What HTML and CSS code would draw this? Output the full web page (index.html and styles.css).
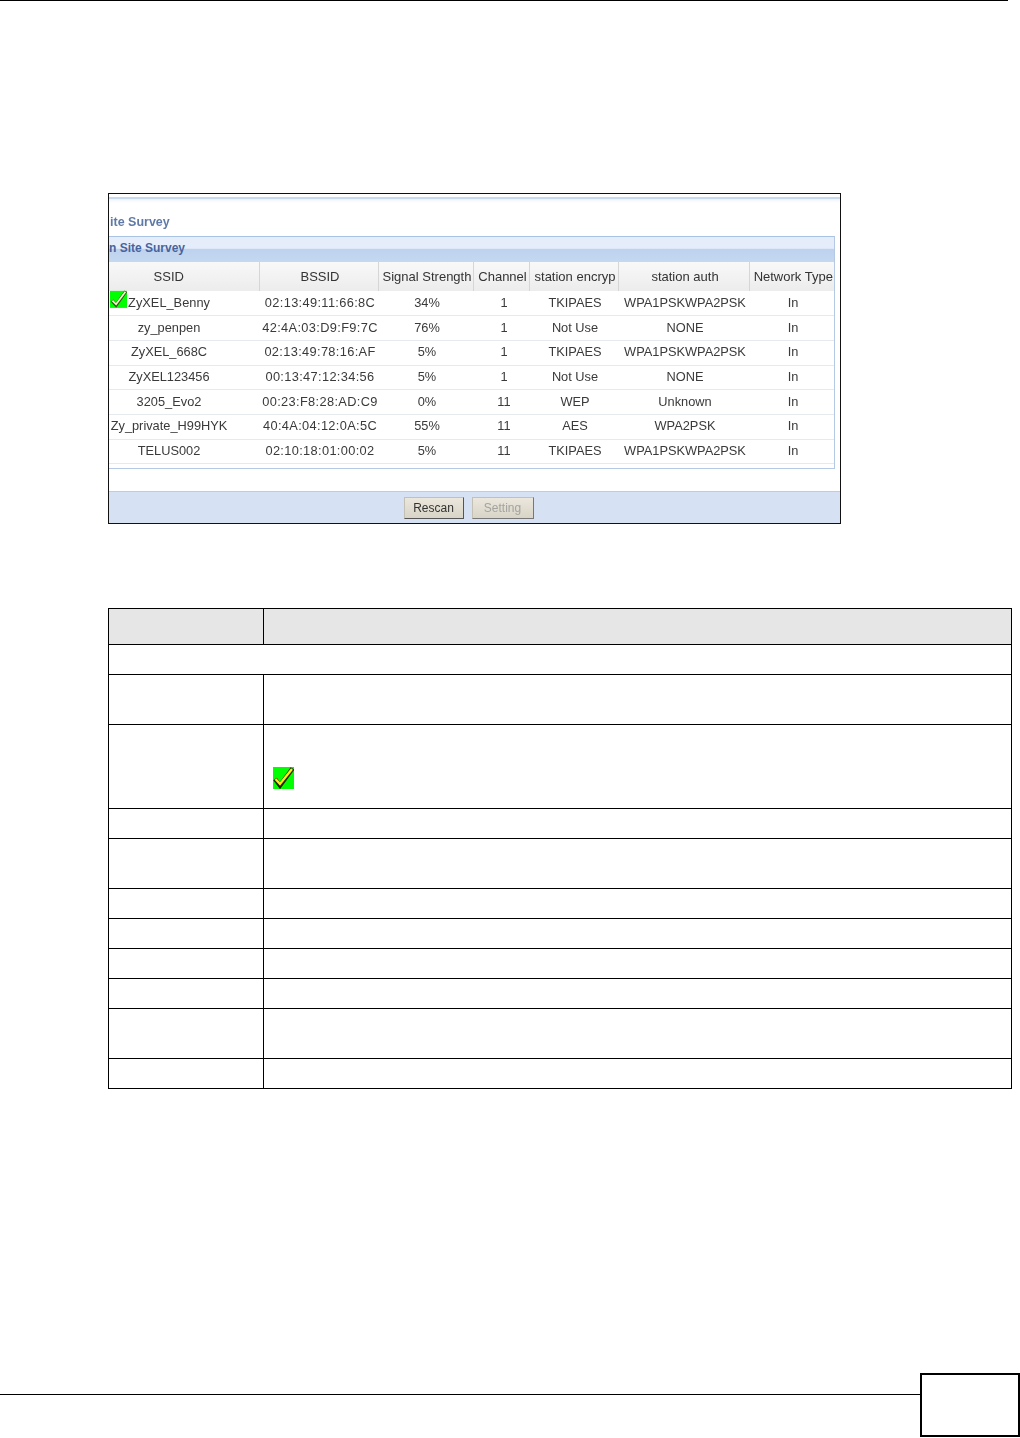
FILE: index.html
```html
<!DOCTYPE html>
<html lang="en">
<head>
<meta charset="utf-8">
<title>Site Survey</title>
<link rel="stylesheet" href="styles.css">
</head>
<body>
<div class="page">
  <header class="top-rule"></header>
  <main class="content">
    <figure class="shot">
      <div class="shot-top"></div>
      <h1 class="shot-title">ite Survey</h1>
      <section class="panel">
        <h2 class="panel-head">n Site Survey</h2>
        <table class="survey">
          <colgroup>
            <col class="c1"><col class="c2"><col class="c3"><col class="c4"><col class="c5"><col class="c6"><col class="c7">
          </colgroup>
          <thead>
            <tr><th class="ssid">SSID</th><th>BSSID</th><th>Signal Strength</th><th>Channel</th><th>station encryp</th><th>station auth</th><th>Network Type</th></tr>
          </thead>
          <tbody>
            <tr><td class="ssid"><svg class="check check-small" viewBox="0 0 21 22"><rect y="1" width="21" height="21" fill="#00ff00"/><path d="M2.5 13 L7.5 18.5 L19.5 1.5" fill="none" stroke="#2a5a10" stroke-width="4"/><path d="M3 13 L7.5 17.5 L19 2" fill="none" stroke="#f4f7c8" stroke-width="2.2"/></svg>ZyXEL_Benny</td><td class="mac">02:13:49:11:66:8C</td><td>34%</td><td class="chan">1</td><td>TKIPAES</td><td>WPA1PSKWPA2PSK</td><td>In</td></tr>
            <tr><td class="ssid">zy_penpen</td><td class="mac">42:4A:03:D9:F9:7C</td><td>76%</td><td class="chan">1</td><td>Not Use</td><td>NONE</td><td>In</td></tr>
            <tr><td class="ssid">ZyXEL_668C</td><td class="mac">02:13:49:78:16:AF</td><td>5%</td><td class="chan">1</td><td>TKIPAES</td><td>WPA1PSKWPA2PSK</td><td>In</td></tr>
            <tr><td class="ssid">ZyXEL123456</td><td class="mac">00:13:47:12:34:56</td><td>5%</td><td class="chan">1</td><td>Not Use</td><td>NONE</td><td>In</td></tr>
            <tr><td class="ssid">3205_Evo2</td><td class="mac">00:23:F8:28:AD:C9</td><td>0%</td><td class="chan">11</td><td>WEP</td><td>Unknown</td><td>In</td></tr>
            <tr><td class="ssid">Zy_private_H99HYK</td><td class="mac">40:4A:04:12:0A:5C</td><td>55%</td><td class="chan">11</td><td>AES</td><td>WPA2PSK</td><td>In</td></tr>
            <tr><td class="ssid">TELUS002</td><td class="mac">02:10:18:01:00:02</td><td>5%</td><td class="chan">11</td><td>TKIPAES</td><td>WPA1PSKWPA2PSK</td><td>In</td></tr>
          </tbody>
        </table>
      </section>
      <footer class="shot-foot">
        <button class="btn" type="button">Rescan</button>
        <button class="btn btn-off" type="button">Setting</button>
      </footer>
    </figure>

    <table class="doc">
      <colgroup><col class="d1"><col class="d2"></colgroup>
      <tbody>
        <tr class="r-head"><td></td><td></td></tr>
        <tr class="r30"><td colspan="2"></td></tr>
        <tr class="r50"><td></td><td></td></tr>
        <tr class="r84"><td></td><td class="icon-cell"><svg class="check check-large" viewBox="0 0 21 22"><rect width="21" height="22" fill="#00ff00"/><path d="M2 12 L7 18.5 L19.5 1.5" fill="none" stroke="#1c2400" stroke-width="4.4"/><path d="M2.5 12 L7 17 L19 2" fill="none" stroke="#ffe81a" stroke-width="2.4"/></svg></td></tr>
        <tr class="r30"><td></td><td></td></tr>
        <tr class="r50"><td></td><td></td></tr>
        <tr class="r30"><td></td><td></td></tr>
        <tr class="r30"><td></td><td></td></tr>
        <tr class="r30"><td></td><td></td></tr>
        <tr class="r30"><td></td><td></td></tr>
        <tr class="r50"><td></td><td></td></tr>
        <tr class="r30"><td></td><td></td></tr>
      </tbody>
    </table>
  </main>
  <footer class="page-foot">
    <div class="foot-rule"></div>
    <div class="page-box"></div>
  </footer>
</div>
</body>
</html>
```

FILE: styles.css
```css
* { box-sizing: border-box; }
html, body { margin: 0; padding: 0; background: #fff; }
body { font-family: "Liberation Sans", Arial, sans-serif; }

.page { width: 1020px; height: 1438px; display: flex; flex-direction: column; }
.top-rule { height: 1px; width: 1008px; background: #000; }
.content { flex: 1; padding: 192px 0 0 108px; }

/* embedded screenshot */
.shot {
  margin: 0;
  width: 733px;
  height: 331px;
  border: 1px solid #111;
  background: #fff;
  display: flex;
  flex-direction: column;
  color: #3a3a3a;
  overflow: hidden;
}
.shot-top { height: 6px; margin-top: 3px; border-top: 2px solid #c9daf0; background: linear-gradient(#eef4fb, #fff); }
.shot-title { margin: 12px 0 0 1px; height: 21px; line-height: 14px; font-size: 12.5px; font-weight: bold; color: #5f7aa6; filter: blur(.3px); }

.panel { width: 725.5px; height: 233px; border-top: 1px solid #a9c3e3; border-right: 1px solid #b5c9e4; border-bottom: 1px solid #b5c9e4; filter: blur(.3px); }
.panel-head {
  margin: 0;
  height: 25px;
  padding-left: 0;
  line-height: 23px;
  font-size: 12px;
  font-weight: bold;
  color: #47649e;
  background: linear-gradient(#e4edf9 0 45%, #bdd2ee 50%, #c6d8f1 100%);
}
.survey { width: 725px; border-collapse: collapse; table-layout: fixed; font-size: 12.8px; }
.c1 { width: 150px; } .c2 { width: 119px; } .c3 { width: 95px; } .c4 { width: 56px; }
.c5 { width: 89px; } .c6 { width: 131px; } .c7 { width: 85px; }
.survey th {
  height: 29px;
  padding: 0 0 0 3px;
  font-weight: normal;
  font-size: 13px;
  white-space: nowrap;
  overflow: hidden;
  color: #333;
  background: linear-gradient(#f8f8f8, #ececec);
  border-right: 1px solid #d6d6d6;
}
.survey th:last-child { border-right: 0; }
.survey td {
  height: 24.7px;
  padding: 0 0 2px 3px;
  text-align: center;
  white-space: nowrap;
  border-bottom: 1px solid #e6e9ee;
}
.survey .ssid { position: relative; padding: 0 30px 2px 0; }
.survey th.ssid { padding-bottom: 0; }
.survey .mac { letter-spacing: .35px; }
.survey .chan { padding-left: 6px; }
.check { display: block; }
.check-small { position: absolute; left: 1px; top: -1px; width: 17px; height: 18px; }

.shot-foot {
  margin-top: 22px;
  height: 32px;
  border-top: 1px solid #bccde2;
  background: #d6e2f3;
  display: flex;
  justify-content: center;
  gap: 8px;
  padding: 5px 12px 0 0;
  filter: blur(.3px);
}
.btn {
  width: 60px;
  height: 22px;
  padding: 0;
  font: 12px "Liberation Sans", Arial, sans-serif;
  color: #333;
  background: linear-gradient(#ebe7dc, #d8d4c8);
  border: 1px solid #c4c0b4;
  border-right-color: #555;
  border-bottom-color: #555;
}
.btn-off { width: 62px; color: #a3a3a0; border-right-color: #777; border-bottom-color: #777; }

/* document table */
.doc {
  margin-top: 84px;
  width: 904px;
  height: 481px;
  border-collapse: collapse;
  table-layout: fixed;
}
.d1 { width: 155px; }
.doc td { border: 1px solid #000; padding: 0; }
.r-head { height: 36px; }
.r-head td { background: #e6e6e6; }
.r30 { height: 30px; }
.r50 { height: 50px; }
.r84 { height: 84px; }
.icon-cell { vertical-align: top; }
.check-large { width: 21px; height: 22px; margin: 42px 0 0 9px; }

/* page footer */
.page-foot { height: 65px; display: flex; align-items: flex-start; }
.foot-rule { width: 920px; height: 1px; margin-top: 21px; background: #000; }
.page-box { width: 100px; height: 64px; border: 2px solid #000; }
```
